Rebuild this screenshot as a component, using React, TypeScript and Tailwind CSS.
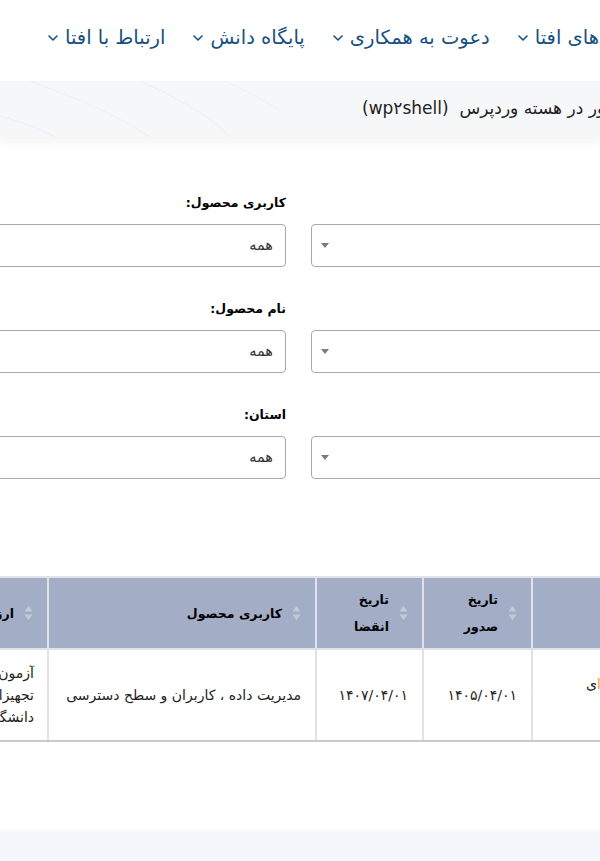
import React from "react";

const navItems = ["سرویس‌های افتا", "دعوت به همکاری", "پایگاه دانش", "ارتباط با افتا"];

const filters = [
  ["نوع محصول:", "کاربری محصول:"],
  ["نام شرکت:", "نام محصول:"],
  ["آزمایشگاه:", "استان:"],
];

function Chevron() {
  return (
    <svg width="10" height="6" viewBox="0 0 10 6" fill="none" className="shrink-0">
      <path d="M1 1l4 4 4-4" stroke="#17507f" strokeWidth="1.6" strokeLinecap="round" strokeLinejoin="round" />
    </svg>
  );
}

function SortIcon() {
  return (
    <svg width="9" height="16" viewBox="0 0 9 16" className="shrink-0">
      <path d="M4.5 1L8.5 6.5H0.5Z" fill="#c3c9d6" />
      <path d="M4.5 15L8.5 9.5H0.5Z" fill="#c3c9d6" />
    </svg>
  );
}

function SelectBox({ value }: { value?: string }) {
  return (
    <div className="h-[43px] rounded-[4px] border border-[#a9a9a9] bg-white flex items-center justify-between pr-[12px] pl-[9px]">
      <span className="text-[14.5px] text-[#333]">{value ?? ""}</span>
      <svg width="8" height="5" viewBox="0 0 8 5">
        <path d="M0 0H8L4 5Z" fill="#7a7a7a" />
      </svg>
    </div>
  );
}

function HeadCell({ label }: { label: string }) {
  return (
    <div className="bg-[#a3aec6] flex items-center gap-[10px] pr-[14px] pl-[10px]">
      <SortIcon />
      <span className="text-[12.5px] leading-[27px] font-bold text-black">{label}</span>
    </div>
  );
}

export default function App() {
  return (
    <div className="w-full h-[861px] overflow-hidden bg-white font-['DejaVu_Sans',sans-serif]">
      {/* top nav */}
      <nav dir="rtl" className="h-[76px] flex items-center justify-end gap-[28px] pl-[48px] whitespace-nowrap">
        {navItems.map((item) => (
          <div key={item} className="flex items-center gap-[7px] text-[19.5px] text-[#17507f] shrink-0">
            <span>{item}</span>
            <Chevron />
          </div>
        ))}
      </nav>

      {/* breadcrumb / title bar */}
      <div dir="rtl" className="relative mt-[5px] h-[56px] bg-[#f6f7f9] shadow-[0_5px_10px_rgba(0,0,0,0.05)] flex items-center justify-end pl-[362px] whitespace-nowrap">
        <svg className="absolute inset-0 w-full h-full" preserveAspectRatio="none" viewBox="0 0 600 56">
          <path d="M30 0C70 15 110 30 150 56" stroke="#eceef2" fill="none" />
          <path d="M140 0C180 18 210 35 230 56" stroke="#eceef2" fill="none" />
          <path d="M0 35C20 40 40 48 55 56" stroke="#eceef2" fill="none" />
          <path d="M225 0C250 12 270 22 280 30" stroke="#eef0f3" fill="none" />
        </svg>
        <span className="relative text-[17px] text-[#222] shrink-0">
          آسیب‌پذیری اجرای کد از راه دور در هسته وردپرس &nbsp;(wp۲shell)
        </span>
      </div>

      {/* filters */}
      <div dir="rtl" className="ml-[-260px] w-[1117px] grid grid-cols-2 gap-x-[25px] gap-y-[31px] mt-[55px]">
        {filters.map(([a, b]) => (
          <React.Fragment key={a}>
            <div className="flex flex-col gap-[10px]">
              <label className="h-[22px] leading-[22px] text-[12.5px] font-bold text-black">{a}</label>
              <SelectBox />
            </div>
            <div className="flex flex-col gap-[10px]">
              <label className="h-[22px] leading-[22px] text-[12.5px] font-bold text-black">{b}</label>
              <SelectBox value="همه" />
            </div>
          </React.Fragment>
        ))}
      </div>

      {/* table */}
      <div dir="rtl" className="mt-[97px] ml-[-100px] w-[821px] grid grid-cols-[188px_107px_105px_266px_147px] gap-[2px] bg-[#dfe2e8] pt-[2px] border-b-2 border-[#cacaca]">
        <div className="bg-[#a3aec6] h-[70px]" />
        <HeadCell label="تاریخ صدور" />
        <HeadCell label="تاریخ انقضا" />
        <HeadCell label="کاربری محصول" />
        <HeadCell label="ارزیابی کننده" />

        <div className="bg-white h-[90px] flex flex-col justify-center pr-[14px] text-[14px] leading-[22px] text-[#222]">
          <span>سامانه جامع رایانه‌<span className="text-[#f0a020]">ا</span>ی</span>
          <span>پارس</span>
        </div>
        <div className="bg-white flex items-center pr-[14px] text-[14px] text-[#222]">۱۴۰۵/۰۴/۰۱</div>
        <div className="bg-white flex items-center pr-[14px] text-[14px] text-[#222]">۱۴۰۷/۰۴/۰۱</div>
        <div className="bg-white flex items-center pr-[14px] text-[14px] text-[#222]">
          مدیریت داده ، کاربران و سطح دسترسی
        </div>
        <div className="bg-white flex flex-col justify-center pr-[13px] text-[14px] leading-[22px] text-[#222] whitespace-nowrap">
          <span>آزمون و ارزیابی</span>
          <span>تجهیزات شبکه</span>
          <span>دانشگاه امیرکبیر</span>
        </div>
      </div>

      {/* footer strip */}
      <div className="mt-[88px] h-[60px] bg-[#f4f7fb]" />
    </div>
  );
}
